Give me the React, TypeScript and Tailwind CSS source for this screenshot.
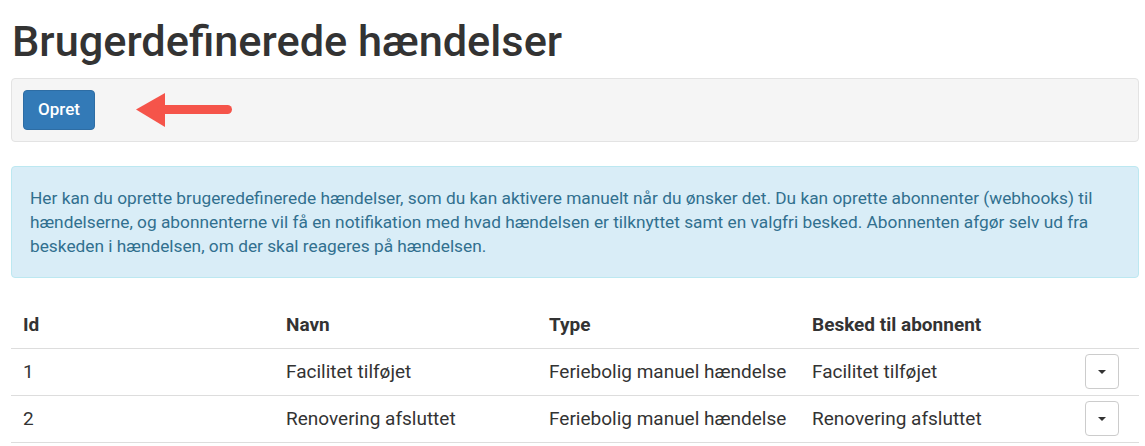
const rows = [
  { id: 1, name: "Facilitet tilføjet", type: "Feriebolig manuel hændelse", message: "Facilitet tilføjet" },
  { id: 2, name: "Renovering afsluttet", type: "Feriebolig manuel hændelse", message: "Renovering afsluttet" },
];

function Arrow() {
  return (
    <svg width="97" height="34" viewBox="0 0 97 34" className="ml-[41px]">
      <polygon points="0,16.5 29,0 29,34" fill="#f5544a" />
      <line x1="26" y1="16.5" x2="91.5" y2="16.5" stroke="#f5544a" strokeWidth="9" strokeLinecap="round" />
    </svg>
  );
}

function Caret() {
  return (
    <svg width="8" height="4" viewBox="0 0 8 4">
      <polygon points="0,0 8,0 4,4" fill="#333" />
    </svg>
  );
}

export default function App() {
  return (
    <div className="min-h-screen bg-white pl-[11px] pr-[6px] text-[#333]" style={{ fontFamily: "Roboto, 'Helvetica Neue', Arial, sans-serif" }}>
      <h1 className="pt-[19px] pb-[13px] pl-[1px] text-[43.3px] font-medium leading-[46px] text-[#333]">
        Brugerdefinerede hændelser
      </h1>

      <div className="flex items-center rounded-[4px] border border-[#e3e3e3] bg-[#f5f5f5] p-[11px]">
        <button className="h-[40px] w-[72px] rounded-[4px] border border-[#2e6da4] bg-[#337ab7] text-[17px] font-medium text-white">
          Opret
        </button>
        <Arrow />
      </div>

      <div className="mt-[24px] rounded-[4px] border border-[#bce8f1] bg-[#d9edf7] px-[18px] py-[19px] text-[17.3px] leading-[24px] text-[#31708f]">
        Her kan du oprette brugeredefinerede hændelser, som du kan aktivere manuelt når du ønsker det. Du kan oprette abonnenter (webhooks) til hændelserne, og abonnenterne vil få en notifikation med hvad hændelsen er tilknyttet samt en valgfri besked. Abonnenten afgør selv ud fra beskeden i hændelsen, om der skal reageres på hændelsen.
      </div>

      <table className="mt-[24px] w-full border-collapse text-[19px] leading-[23px]">
        <thead>
          <tr className="border-b border-[#ddd]">
            <th className="h-[46px] w-[263px] px-[12px] text-left font-bold">Id</th>
            <th className="w-[263px] px-[12px] text-left font-bold">Navn</th>
            <th className="w-[263px] px-[12px] text-left font-bold">Type</th>
            <th className="px-[12px] text-left font-bold">Besked til abonnent</th>
            <th className="px-[12px]"></th>
          </tr>
        </thead>
        <tbody>
          {rows.map((r) => (
            <tr key={r.id} className="border-b border-[#ddd]">
              <td className="h-[47px] px-[12px]">{r.id}</td>
              <td className="px-[12px]">{r.name}</td>
              <td className="px-[12px]">{r.type}</td>
              <td className="px-[12px]">{r.message}</td>
              <td className="pr-[20px] text-right">
                <button className="inline-flex h-[35px] w-[34px] items-center justify-center rounded-[4px] border border-[#ccc] bg-white align-middle">
                  <Caret />
                </button>
              </td>
            </tr>
          ))}
        </tbody>
      </table>
    </div>
  );
}
